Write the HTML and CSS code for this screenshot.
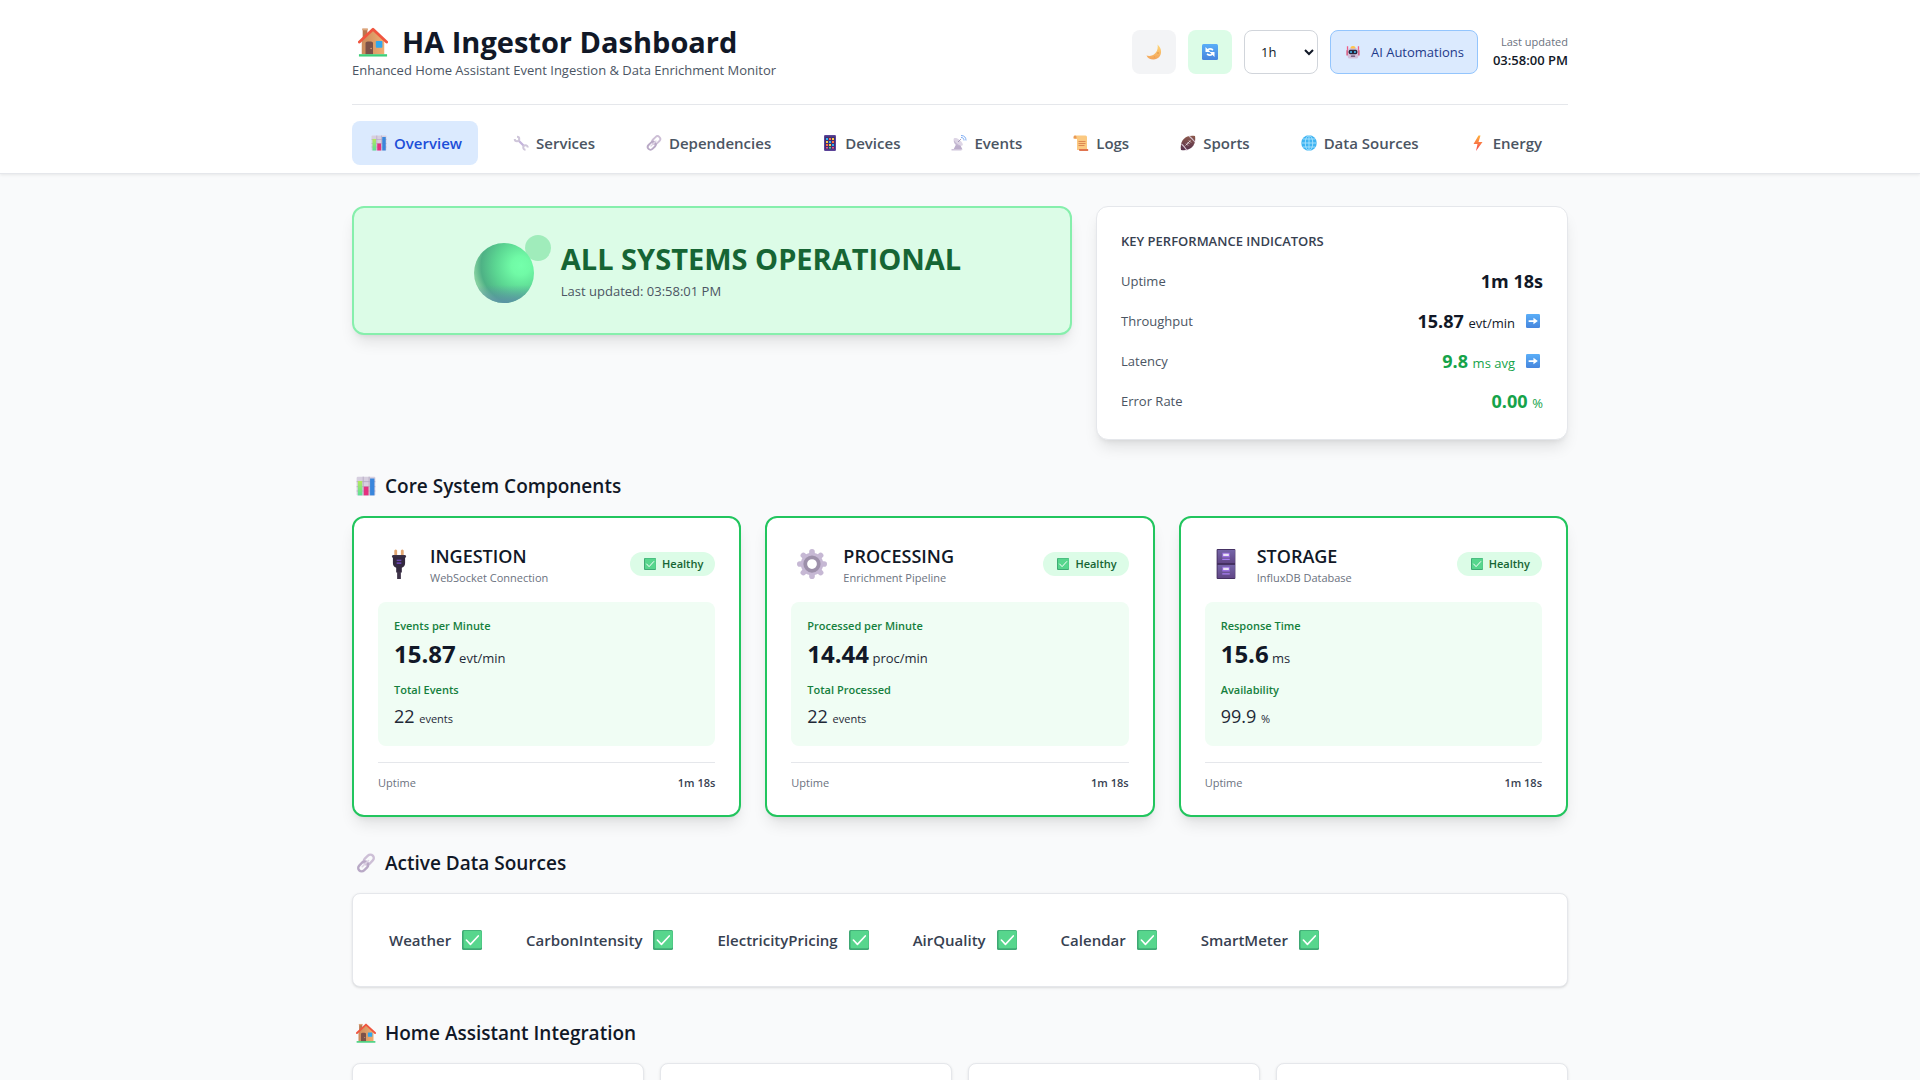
FILE: index.html
```html
<!DOCTYPE html>
<html lang="en">
<head>
<meta charset="utf-8">
<meta name="viewport" content="width=device-width, initial-scale=1">
<title>HA Ingestor Dashboard</title>
<link rel="stylesheet" href="styles.css">
</head>
<body>
<svg class="sprite" aria-hidden="true" width="0" height="0">
  <defs>
    <linearGradient id="g-wall" x1="0" x2="1"><stop offset="0" stop-color="#c98a5c"/><stop offset="1" stop-color="#f0ae72"/></linearGradient>
    <linearGradient id="g-blue" x1="0" y1="0" x2="0" y2="1"><stop offset="0" stop-color="#5aaef8"/><stop offset="1" stop-color="#4685dd"/></linearGradient>
    <linearGradient id="g-lime" x1="0" y1="0" x2="0" y2="1"><stop offset="0" stop-color="#b4e85c"/><stop offset="1" stop-color="#5be09a"/></linearGradient>
    <linearGradient id="g-metal" x1="0" y1="0" x2="0" y2="1"><stop offset="0" stop-color="#d9d2e2"/><stop offset="1" stop-color="#b5a6cb"/></linearGradient>
    <linearGradient id="g-bolt" x1="0" y1="0" x2="0" y2="1"><stop offset="0" stop-color="#ffb13b"/><stop offset="1" stop-color="#f4404f"/></linearGradient>
    <linearGradient id="g-ball" x1="0" y1="0" x2="0" y2="1"><stop offset="0" stop-color="#8d5a4c"/><stop offset="1" stop-color="#57304d"/></linearGradient>
    <linearGradient id="g-moon" x1="0" y1="0" x2="0" y2="1"><stop offset="0" stop-color="#ffd978"/><stop offset="1" stop-color="#f3a45c"/></linearGradient>
    <linearGradient id="g-cabinet" x1="0" y1="0" x2="0" y2="1"><stop offset="0" stop-color="#7565a8"/><stop offset="1" stop-color="#614686"/></linearGradient>
    <radialGradient id="g-orb" cx=".78" cy=".38" r=".78"><stop offset="0" stop-color="#74ffab"/><stop offset=".2" stop-color="#70faa6"/><stop offset=".55" stop-color="#5bd692"/><stop offset=".85" stop-color="#4eb185"/><stop offset="1" stop-color="#84cf9f"/></radialGradient>
    <linearGradient id="g-orbshade" x1="0" y1="0" x2="0" y2="1"><stop offset=".7" stop-color="#5c8fa8" stop-opacity="0"/><stop offset="1" stop-color="#5c8fa8" stop-opacity=".9"/></linearGradient>
    <symbol id="house" viewBox="0 0 32 32">
      <path d="M5 2h5v12H5z" fill="#b9764f"/><path d="M4.500 1.500h6v2h-6z" fill="#dca57b"/>
      <path d="M16 3 28 14v15H4V14z" fill="url(#g-wall)"/>
      <path d="m1.500 16 14.500-13.500L30.500 16" fill="none" stroke="#f0553f" stroke-width="3" stroke-linecap="round" stroke-linejoin="round"/>
      <path d="M8 17c0-2 8-2 8 0v12H8z" fill="#7c5149"/><circle cx="14" cy="23" r=".8" fill="#d9a47a"/>
      <rect x="19" y="15" width="7" height="7" rx=".8" fill="#2fa8ee"/><path d="M1 29h30v2.500H1z" fill="#3ecf79"/>
    </symbol>
    <symbol id="chart" viewBox="0 0 32 32">
      <rect x="1" y="1" width="30" height="30" rx="2" fill="#d7cfdf"/><path d="M1 9h30M1 17h30M1 24h30M11.500 1v30M21 1v30" stroke="#b3a8c2" stroke-width="1.300"/>
      <rect x="3" y="8" width="7" height="23" fill="url(#g-lime)"/><rect x="12.500" y="17" width="7.500" height="14" fill="#e5307f"/><rect x="22.500" y="4" width="7" height="27" fill="#3a86dc"/>
    </symbol>
    <symbol id="wrench" viewBox="0 0 32 32">
      <path d="M11 11 22 22" stroke="#c4b4dc" stroke-width="4.500"/>
      <path d="M8 3.500A4.500 4.500 0 1 1 3.500 8M25 29.500A4.500 4.500 0 1 1 29.500 25" fill="none" stroke="#cfc6da" stroke-width="4"/>
    </symbol>
    <symbol id="link" viewBox="0 0 32 32">
      <rect x="11.500" y="5" width="18" height="11" rx="5.500" transform="rotate(-45 20.500 10.500)" fill="none" stroke="#cdbfd6" stroke-width="3.800"/>
      <rect x="2.500" y="16" width="18" height="11" rx="5.500" transform="rotate(-45 11.500 21.500)" fill="none" stroke="#b9a9c6" stroke-width="3.800"/>
      <path d="m10 22 10-10" stroke="#ddd3e4" stroke-width="2.600" stroke-linecap="round"/>
    </symbol>
    <symbol id="phone" viewBox="0 0 32 32">
      <rect x="4" y="0" width="24" height="32" rx="2.500" fill="#5b4399"/><rect x="6" y="3" width="20" height="26" fill="#423070"/>
      <path d="M8 6h4v4H8zM14 12h4v4h-4zM20 18h4v4h-4z" fill="#2fb2f5"/><path d="M14 6h4v4h-4zM20 12h4v4h-4zM8 18h4v4H8z" fill="#ff7043"/><path d="M20 6h4v4h-4zM8 12h4v4H8zM14 18h4v4h-4z" fill="#ffc94a"/><path d="M8 24h4v3H8zM20 24h4v3h-4z" fill="#ef4f91"/><path d="M14 24h4v3h-4z" fill="#4adf8e"/>
    </symbol>
    <symbol id="dish" viewBox="0 0 32 32">
      <path d="M10 19h8l5 10H5z" fill="#bcaecb"/><path d="M1 28h20v3H1z" fill="#cfc4da"/>
      <path d="M6 7c-3 12 7 17 17 13z" fill="#c5b9d2"/><ellipse cx="14.500" cy="13.500" rx="11" ry="4.500" transform="rotate(38 14.500 13.500)" fill="#ddd5e5"/>
      <path d="m14 14 6-6" stroke="#9a8aae" stroke-width="1.600"/><path d="M20 5c4 0 6 2 6 6M20 1c7 0 10 4 10 10" fill="none" stroke="#7cabf3" stroke-width="2"/>
    </symbol>
    <symbol id="scroll" viewBox="0 0 32 32">
      <path d="M3 1h22q3 0 3 3v26H8V8H3q-2-3 0-7z" fill="#fbc981"/><path d="M1 4q0-3 3-3t3 3v3H1z" fill="#e99a56"/>
      <path d="M12 28h18q2 4-2 4H14q-3 0-2-4z" fill="#e0744f"/><path d="M11 13h14M11 17h14M11 21h12" stroke="#d9804e" stroke-width="1.800"/>
    </symbol>
    <symbol id="football" viewBox="0 0 32 32">
      <path d="M2 30C-1 12 10-1 30 2c3 18-8 31-28 28z" fill="url(#g-ball)"/>
      <path d="M3 18q5 4 11 13M18 2q5 4 12 12" fill="none" stroke="#d5c4d2" stroke-width="2.200"/><path d="m11 21 10-10M12 17l4 4M15 14l4 4M18 11l4 4" stroke="#efe6ec" stroke-width="1.500"/>
    </symbol>
    <symbol id="globe" viewBox="0 0 32 32">
      <circle cx="16" cy="16" r="15.500" fill="#3fb4f2"/>
      <path d="M1 16h30M16 1v30M4 8h24M4 24h24" stroke="#b5e8ff" stroke-width="1.600"/><ellipse cx="16" cy="16" rx="7.500" ry="15" fill="none" stroke="#b5e8ff" stroke-width="1.600"/>
    </symbol>
    <symbol id="bolt" viewBox="0 0 32 32"><path d="M17 1 7 18h8l-3 14 13-18h-8l4-13z" fill="url(#g-bolt)"/></symbol>
    <symbol id="moon" viewBox="0 0 32 32"><path d="M23 1c13 11 7 30-8 30C8 31 3 28 1 23c13 4 25-7 22-22z" fill="url(#g-moon)"/><circle cx="24" cy="18" r="2" fill="#eaa250"/><circle cx="17" cy="26" r="1.600" fill="#eaa250"/></symbol>
    <symbol id="refresh" viewBox="0 0 32 32">
      <rect width="32" height="32" rx="3" fill="url(#g-blue)"/>
      <path d="M10 13q5-6 12-1M22 19q-5 6-12 1" fill="none" stroke="#fff" stroke-width="3.200"/><path d="M7 6v10h10zM25 26V16H15z" fill="#fff"/>
    </symbol>
    <symbol id="robot" viewBox="0 0 32 32">
      <path d="M2 3h3v10H2zM27 3h3v10h-3z" fill="#f05b86"/><path d="M1 12h4v12H1zM27 12h4v12h-4z" fill="#d9486e"/>
      <path d="M4 10q12-9 24 0v16q0 5-5 5H9q-5 0-5-5z" fill="#d3bfda"/><path d="M10 5q6-5 12 0l-2 3h-8z" fill="#ffc44d"/>
      <rect x="6" y="11" width="20" height="10" rx="4" fill="#29243c"/><circle cx="11.500" cy="16" r="2.200" fill="#49c8ff"/><circle cx="20.500" cy="16" r="2.200" fill="#49c8ff"/><rect x="11" y="24" width="10" height="3" rx="1.500" fill="#5c4668"/>
    </symbol>
    <symbol id="arrow" viewBox="0 0 32 32"><rect width="32" height="32" rx="3" fill="url(#g-blue)"/><path d="M6 14h11V8.500L27 16l-10 7.500V18H6z" fill="#fff"/></symbol>
    <symbol id="check" viewBox="0 0 32 32">
      <rect width="32" height="32" rx="2.500" fill="#3fa874"/><rect x="2.500" y="1" width="29" height="28" rx="2" fill="#57d68d"/><path d="m7 16 6.500 7L26 9.500" fill="none" stroke="#fff" stroke-width="2.600" stroke-linecap="round" stroke-linejoin="round"/>
    </symbol>
    <symbol id="plug" viewBox="0 0 32 32">
      <path d="M11 1.500q1.500-2 3 0V8h-3zM18 1.500q1.500-2 3 0V8h-3z" fill="#e2a672"/><rect x="8.500" y="6.500" width="15" height="3" rx="1.500" fill="#3c3146"/>
      <path d="M9.500 8h13v7q0 4-3.500 5v5h-6v-5q-3.500-1-3.500-5z" fill="#33283f"/><path d="M14 24h4v8h-4z" fill="#3e3349"/><path d="M13.500 12h5M13.500 15h5" stroke="#7d4fd8" stroke-width="1.300"/>
    </symbol>
    <symbol id="gear" viewBox="0 0 32 32">
      <g fill="#c6b8d4"><rect x="13" y="0" width="6" height="32" rx="3"/><rect x="13" y="0" width="6" height="32" rx="3" transform="rotate(45 16 16)"/><rect x="13" y="0" width="6" height="32" rx="3" transform="rotate(90 16 16)"/><rect x="13" y="0" width="6" height="32" rx="3" transform="rotate(135 16 16)"/><circle cx="16" cy="16" r="12"/></g>
      <circle cx="16" cy="16" r="7.200" fill="#fff" stroke="#9d90aa" stroke-width="4"/>
    </symbol>
    <symbol id="cabinet" viewBox="0 0 32 32">
      <rect x="6" y="0" width="20" height="32" rx="1" fill="#432f5f"/><rect x="7" y="1" width="18.500" height="14" fill="url(#g-cabinet)"/><rect x="7" y="17" width="18.500" height="14" fill="url(#g-cabinet)"/>
      <path d="M12 4h8v5h-8zM12 19h8v5h-8z" fill="#9a6fe0"/><path d="M13 5h6v2.500h-6zM13 20h6v2.500h-6z" fill="#eae2f5"/><path d="M12 11h8M12 26.500h8" stroke="#a77cf0" stroke-width="1.200"/>
    </symbol>
  </defs>
</svg>

<header class="topbar">
  <div class="container">
    <div class="masthead">
      <div>
        <h1 class="title"><svg class="icon icon-30"><use href="#house"/></svg>HA Ingestor Dashboard</h1>
        <p class="subtitle">Enhanced Home Assistant Event Ingestion &amp; Data Enrichment Monitor</p>
      </div>
      <div class="controls">
        <button class="square" type="button" aria-label="Switch theme"><svg class="icon icon-16"><use href="#moon"/></svg></button>
        <button class="square square-on" type="button" aria-label="Auto refresh"><svg class="icon icon-16"><use href="#refresh"/></svg></button>
        <select class="range" aria-label="Time range"><option>1h</option><option>6h</option><option>24h</option></select>
        <button class="automations" type="button"><svg class="icon icon-14"><use href="#robot"/></svg>AI Automations</button>
        <div class="updated"><div class="updated-label">Last updated</div><div class="updated-time">03:58:00 PM</div></div>
      </div>
    </div>
    <nav class="tabs" aria-label="Sections">
      <button class="tab tab-active" type="button"><svg class="icon icon-16"><use href="#chart"/></svg>Overview</button>
      <button class="tab" type="button"><svg class="icon icon-16"><use href="#wrench"/></svg>Services</button>
      <button class="tab" type="button"><svg class="icon icon-16"><use href="#link"/></svg>Dependencies</button>
      <button class="tab" type="button"><svg class="icon icon-16"><use href="#phone"/></svg>Devices</button>
      <button class="tab" type="button"><svg class="icon icon-16"><use href="#dish"/></svg>Events</button>
      <button class="tab" type="button"><svg class="icon icon-16"><use href="#scroll"/></svg>Logs</button>
      <button class="tab" type="button"><svg class="icon icon-16"><use href="#football"/></svg>Sports</button>
      <button class="tab" type="button"><svg class="icon icon-16"><use href="#globe"/></svg>Data Sources</button>
      <button class="tab" type="button"><svg class="icon icon-16"><use href="#bolt"/></svg>Energy</button>
    </nav>
  </div>
</header>

<main class="container content">
  <section class="summary">
    <div class="hero">
      <svg class="orb" viewBox="0 0 82 61" aria-hidden="true"><circle cx="75" cy="8" r="13" fill="#a0ecbb"/><circle cx="41" cy="33" r="30" fill="url(#g-orb)"/><circle cx="41" cy="33" r="30" fill="url(#g-orbshade)"/></svg>
      <div>
        <h2 class="hero-title">ALL SYSTEMS OPERATIONAL</h2>
        <p class="hero-time">Last updated: 03:58:01 PM</p>
      </div>
    </div>
    <div class="kpis">
      <h3 class="kpis-title">KEY PERFORMANCE INDICATORS</h3>
      <dl class="kpi-list">
        <div class="kpi"><dt>Uptime</dt><dd><strong>1m 18s</strong></dd></div>
        <div class="kpi"><dt>Throughput</dt><dd><span><strong>15.87</strong> <small>evt/min</small></span><svg class="icon icon-14"><use href="#arrow"/></svg></dd></div>
        <div class="kpi kpi-good"><dt>Latency</dt><dd><span><strong>9.8</strong> <small>ms avg</small></span><svg class="icon icon-14"><use href="#arrow"/></svg></dd></div>
        <div class="kpi kpi-good"><dt>Error Rate</dt><dd><span><strong>0.00</strong> <small>%</small></span></dd></div>
      </dl>
    </div>
  </section>

  <section>
    <h2 class="section-title"><svg class="icon icon-20"><use href="#chart"/></svg>Core System Components</h2>
    <div class="components">
      <article class="component">
        <div class="component-head">
          <svg class="icon icon-30"><use href="#plug"/></svg>
          <div class="component-name"><h3>INGESTION</h3><p>WebSocket Connection</p></div>
          <span class="badge"><svg class="icon icon-12"><use href="#check"/></svg>Healthy</span>
        </div>
        <div class="metrics">
          <div class="metric-label">Events per Minute</div>
          <div class="metric-main"><strong>15.87</strong><small> evt/min</small></div>
          <div class="metric-label">Total Events</div>
          <div class="metric-sub">22 <small>events</small></div>
        </div>
        <div class="component-foot"><span>Uptime</span><strong>1m 18s</strong></div>
      </article>
      <article class="component">
        <div class="component-head">
          <svg class="icon icon-30"><use href="#gear"/></svg>
          <div class="component-name"><h3>PROCESSING</h3><p>Enrichment Pipeline</p></div>
          <span class="badge"><svg class="icon icon-12"><use href="#check"/></svg>Healthy</span>
        </div>
        <div class="metrics">
          <div class="metric-label">Processed per Minute</div>
          <div class="metric-main"><strong>14.44</strong><small> proc/min</small></div>
          <div class="metric-label">Total Processed</div>
          <div class="metric-sub">22 <small>events</small></div>
        </div>
        <div class="component-foot"><span>Uptime</span><strong>1m 18s</strong></div>
      </article>
      <article class="component">
        <div class="component-head">
          <svg class="icon icon-30"><use href="#cabinet"/></svg>
          <div class="component-name"><h3>STORAGE</h3><p>InfluxDB Database</p></div>
          <span class="badge"><svg class="icon icon-12"><use href="#check"/></svg>Healthy</span>
        </div>
        <div class="metrics">
          <div class="metric-label">Response Time</div>
          <div class="metric-main"><strong>15.6</strong><small> ms</small></div>
          <div class="metric-label">Availability</div>
          <div class="metric-sub">99.9 <small>%</small></div>
        </div>
        <div class="component-foot"><span>Uptime</span><strong>1m 18s</strong></div>
      </article>
    </div>
  </section>

  <section>
    <h2 class="section-title"><svg class="icon icon-20"><use href="#link"/></svg>Active Data Sources</h2>
    <ul class="sources">
      <li>Weather<svg class="icon icon-20"><use href="#check"/></svg></li>
      <li>CarbonIntensity<svg class="icon icon-20"><use href="#check"/></svg></li>
      <li>ElectricityPricing<svg class="icon icon-20"><use href="#check"/></svg></li>
      <li>AirQuality<svg class="icon icon-20"><use href="#check"/></svg></li>
      <li>Calendar<svg class="icon icon-20"><use href="#check"/></svg></li>
      <li>SmartMeter<svg class="icon icon-20"><use href="#check"/></svg></li>
    </ul>
  </section>

  <section>
    <h2 class="section-title"><svg class="icon icon-20"><use href="#house"/></svg>Home Assistant Integration</h2>
    <div class="integrations">
      <div class="integration"></div>
      <div class="integration"></div>
      <div class="integration"></div>
      <div class="integration"></div>
    </div>
  </section>
</main>
</body>
</html>
```
FILE: styles.css
```css
*, *::before, *::after { box-sizing: border-box; }

html { scrollbar-width: none; }

body, h1, h2, h3, p, dl, dd, ul { margin: 0; padding: 0; }

body {
  background: #f9fafb;
  color: #111827;
  font: 15px/24px "Open Sans", "Noto Sans", sans-serif;
}

button, select { font: inherit; color: inherit; cursor: pointer; }

small { line-height: 1; }

.sprite { position: absolute; }

.icon { flex: none; display: block; }
.icon-12 { width: 12px; height: 12px; margin: 0 2px; }
.icon-14 { width: 14px; height: 14px; margin: 0 3px; }
.icon-16 { width: 16px; height: 16px; margin: 0 3px; }
.icon-20 { width: 20px; height: 20px; margin: 0 4px; }
.icon-30 { width: 30px; height: 30px; margin: 0 6px; }

.container { max-width: 1280px; margin: 0 auto; padding: 0 32px; }

/* Header */
.topbar {
  background: #fff;
  border-bottom: 1px solid #e5e7eb;
  box-shadow: 0 1px 3px rgba(0, 0, 0, .08);
}
.masthead {
  display: flex;
  align-items: center;
  justify-content: space-between;
  padding: 24px 0;
}
.title {
  display: flex;
  align-items: center;
  gap: 8px;
  font-size: 29px;
  line-height: 36px;
  font-weight: 700;
}
.subtitle { font-size: 13px; line-height: 20px; color: #4b5563; }

.controls { display: flex; align-items: center; gap: 12px; font-size: 13px; }
.square {
  display: grid;
  place-items: center;
  width: 44px;
  height: 44px;
  padding: 0;
  border: 0;
  border-radius: 8px;
  background: #f3f4f6;
}
.square-on { background: #dcfce7; }
.range {
  width: 74px;
  height: 44px;
  padding: 0 0 0 12px;
  border: 1px solid #d1d5db;
  border-radius: 8px;
  background: #fff;
}
.automations {
  display: flex;
  align-items: center;
  gap: 8px;
  height: 44px;
  padding: 0 13px 0 12px;
  border: 1px solid #93c5fd;
  border-radius: 8px;
  background: #dbeafe;
  color: #1e3a8a;
}
.updated { min-width: 78px; text-align: right; }
.updated-label { font-size: 11px; line-height: 16px; color: #6b7280; }
.updated-time { line-height: 20px; font-weight: 600; }

.tabs {
  display: flex;
  gap: 16px;
  padding: 16px 0 8px;
  border-top: 1px solid #e5e7eb;
}
.tab {
  display: flex;
  align-items: center;
  gap: 4px;
  height: 44px;
  padding: 0 16px;
  border: 0;
  border-radius: 8px;
  background: transparent;
  color: #4b5563;
  font-weight: 600;
}
.tab-active { background: #dbeafe; color: #1d4ed8; }

/* Page body */
.content {
  display: flex;
  flex-direction: column;
  gap: 32px;
  padding-top: 32px;
  padding-bottom: 32px;
}

.summary {
  display: grid;
  grid-template-columns: repeat(5, 1fr);
  gap: 24px;
  align-items: start;
}
.hero {
  grid-column: span 3;
  display: flex;
  align-items: center;
  justify-content: center;
  gap: 16px;
  padding: 32px;
  border: 2px solid #86efac;
  border-radius: 12px;
  background: #dcfce7;
  box-shadow: 0 10px 15px -3px rgba(0, 0, 0, .1), 0 4px 6px -4px rgba(0, 0, 0, .1);
}
.orb { flex: none; width: 82px; height: 61px; overflow: visible; }
.hero-title { font-size: 29px; line-height: 36px; font-weight: 700; color: #166534; }
.hero-time { margin-top: 4px; font-size: 13px; line-height: 20px; color: #4b5563; }

.kpis {
  grid-column: span 2;
  padding: 24px;
  border: 1px solid #e5e7eb;
  border-radius: 12px;
  background: #fff;
  box-shadow: 0 10px 15px -3px rgba(0, 0, 0, .1), 0 4px 6px -4px rgba(0, 0, 0, .1);
}
.kpis-title { font-size: 13px; line-height: 20px; font-weight: 600; color: #374151; }
.kpi-list { display: flex; flex-direction: column; gap: 12px; margin-top: 16px; }
.kpi {
  display: flex;
  align-items: center;
  justify-content: space-between;
  line-height: 28px;
}
.kpi dt { font-size: 13px; color: #4b5563; }
.kpi dd { display: flex; align-items: center; gap: 8px; font-size: 18px; }
.kpi small { font-size: 13px; }
.kpi-good dd { color: #16a34a; }

.section-title {
  display: flex;
  align-items: center;
  gap: 5px;
  margin-bottom: 16px;
  font-size: 19px;
  line-height: 28px;
  font-weight: 600;
}

/* Core components */
.components { display: grid; grid-template-columns: repeat(3, 1fr); gap: 24px; }
.component {
  padding: 24px;
  border: 2px solid #22c55e;
  border-radius: 12px;
  background: #fff;
  box-shadow: 0 10px 15px -3px rgba(0, 0, 0, .1), 0 4px 6px -4px rgba(0, 0, 0, .1);
}
.component-head { display: flex; align-items: center; gap: 10px; margin-bottom: 16px; }
.component-name { flex: 1; }
.component-name h3 { font-size: 18px; line-height: 28px; font-weight: 600; }
.component-name p { font-size: 11px; line-height: 16px; color: #6b7280; }
.badge {
  display: flex;
  align-items: center;
  gap: 4px;
  padding: 4px 12px;
  border-radius: 12px;
  background: #dcfce7;
  color: #166534;
  font-size: 11px;
  line-height: 16px;
  font-weight: 600;
}
.metrics { padding: 16px; border-radius: 8px; background: #f0fdf4; }
.metric-label { font-size: 11px; line-height: 16px; font-weight: 600; color: #15803d; }
.metric-main { margin: 4px 0 12px; font-size: 24px; line-height: 32px; }
.metric-main small { font-size: 13px; color: #1f2937; }
.metric-sub { margin-top: 4px; font-size: 18px; line-height: 28px; font-weight: 500; color: #1f2937; }
.metric-sub small { font-size: 11px; }
.component-foot {
  display: flex;
  justify-content: space-between;
  margin-top: 16px;
  padding-top: 12px;
  border-top: 1px solid #e5e7eb;
  font-size: 11px;
  line-height: 16px;
  color: #6b7280;
}
.component-foot strong { font-weight: 600; color: #374151; }

/* Data sources */
.sources {
  display: flex;
  flex-wrap: wrap;
  gap: 16px;
  padding: 24px;
  border: 1px solid #e5e7eb;
  border-radius: 8px;
  background: #fff;
  box-shadow: 0 1px 3px rgba(0, 0, 0, .1), 0 1px 2px -1px rgba(0, 0, 0, .1);
  list-style: none;
}
.sources li {
  display: flex;
  align-items: center;
  gap: 7px;
  height: 44px;
  padding: 0 12px;
  color: #374151;
  font-weight: 600;
}

/* Home Assistant integration */
.integrations { display: grid; grid-template-columns: repeat(4, 1fr); gap: 16px; }
.integration {
  min-height: 128px;
  border: 1px solid #e5e7eb;
  border-radius: 8px;
  background: #fff;
  box-shadow: 0 1px 3px rgba(0, 0, 0, .1);
}
```
